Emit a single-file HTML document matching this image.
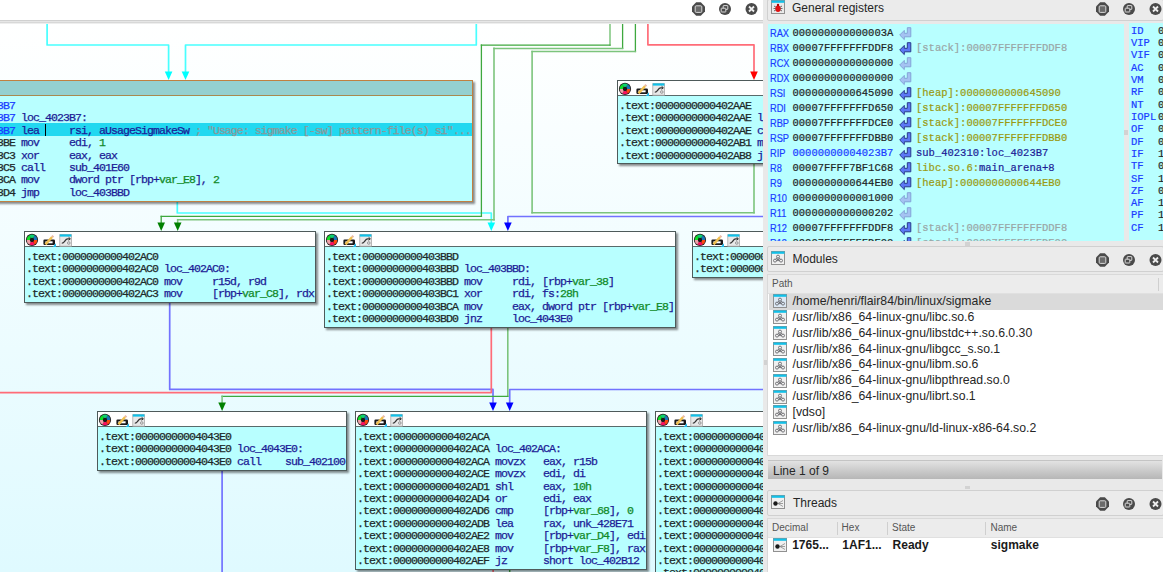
<!DOCTYPE html><html><head><meta charset="utf-8"><style>
*{margin:0;padding:0;box-sizing:border-box}
body{width:1163px;height:572px;overflow:hidden;background:#e9e9e9;position:relative;font-family:"Liberation Sans",sans-serif}
.graph{position:absolute;left:0;top:0;width:762.5px;height:572px;overflow:hidden;background:#fff}
.gtop{position:absolute;left:0;top:0;width:763px;height:20px;background:#fff}
.gsep{position:absolute;left:0;top:20px;width:763px;height:4px;background:linear-gradient(#d0d0d0 0,#d0d0d0 1px,#e6e6e6 1px,#e6e6e6 2px,#d8d8d8 2px,#d8d8d8 3px,#eeeeee 3px)}
.sep{position:absolute;left:763px;top:0;width:4px;height:572px;background:#e8e8e8;border-right:1px solid #dcdcdc}
.gbody{position:absolute;left:0;top:24px;width:763px;height:548px;background:linear-gradient(#ffffff,#dffaff);overflow:hidden}
.edges{position:absolute;left:0;top:0}
.node{position:absolute;border:1px solid #4e5a5a;background:#b8ffff;box-shadow:2px 2px 2px rgba(0,0,0,.45);font-family:"Liberation Mono",monospace;font-size:11.6px;letter-spacing:-0.96px;-webkit-text-stroke:0.25px}
.node .tb{position:absolute;left:0;top:0;right:0;height:15px;background:#fff;border-bottom:1px solid #5a6a6a}
.node.sel{border-color:#c08040}
.node.sel .tb{background:#94d0d0;border-bottom-color:#a88a50}
.ic{position:absolute;left:0;top:0}
.ln{position:absolute;left:1px;white-space:pre;line-height:12.4px;height:12.4px}
.hl{position:absolute;left:0;right:0;height:12.6px;background:#22d8f0}
.cur{position:absolute;left:162.6px;top:42.6px;width:1.6px;height:12px;background:#000}

.ttl{position:absolute;background:#ebebeb;border:1px solid #d0d0d0;border-radius:2px}
.tt{position:absolute;font-size:12px;color:#262626;line-height:14px}
.regs{position:absolute;background:#b8ffff;overflow:hidden;font-family:"Liberation Mono",monospace;font-size:10.5px;-webkit-text-stroke:0.2px}
.rn{position:absolute;left:2px;transform:scaleX(0.88);transform-origin:0 0;line-height:15px;color:#1a3cff;font-family:"Liberation Sans",sans-serif;font-size:10.5px}
.rv{position:absolute;left:24.5px;line-height:15px;color:#1e2626}
.rr{position:absolute;left:148px;line-height:15px;white-space:pre}
.fn{position:absolute;left:2px;line-height:12.32px;color:#1a3cff}
.fv{position:absolute;left:29px;line-height:12.32px;color:#1e2626}
.list{position:absolute;background:#fff;border:1px solid #d9d9d9;overflow:hidden}
.hdr{position:absolute;left:0;top:0;right:0;background:#ececec;font-size:10px;color:#555;border-bottom:1px solid #e0e0e0}
.hsep{position:absolute;top:3px;width:1px;height:13px;background:#cfcfcf}
.mt{position:absolute;left:24.5px;font-size:12.25px;line-height:15.85px;color:#262626;white-space:pre}
.status{position:absolute;background:linear-gradient(#e2e2e2,#b6b6b6);font-size:12px;color:#262626;border-top:1px solid #c4c4c4}
.tr{position:absolute;top:19.6px;font-size:12px;font-weight:bold;color:#1a1a1a}
</style></head><body><div class="ttl" style="left:767px;top:-1px;width:397px;height:22px"></div>
<svg style="position:absolute;left:771px;top:0px" width="14" height="14" viewBox="0 0 14 14">
<rect x="0.5" y="0.5" width="13" height="13" fill="#eaeaea" stroke="#909090" stroke-width="1"/>
<rect x="0.5" y="0.5" width="13" height="2.3" fill="#12c0e8"/>
<path d="M3,6 L11,11 M11,6 L3,11 M2.5,8.5 L11.5,8.5" stroke="#333" stroke-width="0.7"/>
<ellipse cx="7" cy="8.7" rx="2.6" ry="3.3" fill="#e01010"/>
<circle cx="7" cy="5" r="1.2" fill="#a00"/>
</svg>
<div class="tt" style="left:792px;top:1px">General registers</div>
<svg style="position:absolute;left:1095.5px;top:1px" width="70" height="16" viewBox="0 0 70 16">
<path d="M3.7,1.8 L8.3,1.8 L12.5,6 L12.5,11 L8.3,15.2 L3.7,15.2 L-0.5,11 L-0.5,6Z" fill="#4a4a4a" transform="translate(0.5,-0.5)"/>
<rect x="3.2" y="4.8" width="6.6" height="6.6" rx="1" fill="#6a6a6a" stroke="#d8d8d8" stroke-width="1"/>
<circle cx="33" cy="8" r="6" fill="#4a4a4a"/>
<rect x="31.2" y="4.6" width="4.6" height="3.8" rx="0.4" fill="none" stroke="#d8d8d8" stroke-width="1"/>
<rect x="29.2" y="7.2" width="4.6" height="3.8" rx="0.4" fill="#4a4a4a" stroke="#d8d8d8" stroke-width="1"/>
<circle cx="59.5" cy="8" r="6" fill="#4a4a4a"/>
<path d="M57,5.5 L62,10.5 M62,5.5 L57,10.5" stroke="#eee" stroke-width="1.8"/>
</svg>
<div class="regs" style="left:768px;top:23.5px;width:356px;height:217.5px">
<div style="position:absolute;left:0;top:2px;width:356px;height:240px">
<div class="rn" style="top:0.0px">RAX</div>
<div class="rv" style="top:0.0px;">000000000000003A</div>
<div style="position:absolute;left:130.6px;top:1.6px"><svg class="ra" width="13" height="14" viewBox="0 0 13 14"><path d="M8.3,0.7 L11.8,0.7 L11.8,9.8 L5.3,9.8 L5.3,12.6 L0.7,8 L5.3,3.4 L5.3,6.3 L8.3,6.3Z" fill="#a4c2f2" stroke="#84a4d8" stroke-width="1" stroke-linejoin="round"/></svg></div>
<div class="rn" style="top:15.0px">RBX</div>
<div class="rv" style="top:15.0px;">00007FFFFFFFDDF8</div>
<div style="position:absolute;left:130.6px;top:16.6px"><svg class="ra" width="13" height="14" viewBox="0 0 13 14"><path d="M8.3,0.7 L11.8,0.7 L11.8,9.8 L5.3,9.8 L5.3,12.6 L0.7,8 L5.3,3.4 L5.3,6.3 L8.3,6.3Z" fill="#5c78f4" stroke="#283a8c" stroke-width="1" stroke-linejoin="round"/></svg></div>
<div class="rr" style="top:15.0px"><span style="color:#9aa6a6">[stack]:00007FFFFFFFDDF8</span></div>
<div class="rn" style="top:30.0px">RCX</div>
<div class="rv" style="top:30.0px;">0000000000000000</div>
<div style="position:absolute;left:130.6px;top:31.6px"><svg class="ra" width="13" height="14" viewBox="0 0 13 14"><path d="M8.3,0.7 L11.8,0.7 L11.8,9.8 L5.3,9.8 L5.3,12.6 L0.7,8 L5.3,3.4 L5.3,6.3 L8.3,6.3Z" fill="#a4c2f2" stroke="#84a4d8" stroke-width="1" stroke-linejoin="round"/></svg></div>
<div class="rn" style="top:45.0px">RDX</div>
<div class="rv" style="top:45.0px;">0000000000000000</div>
<div style="position:absolute;left:130.6px;top:46.6px"><svg class="ra" width="13" height="14" viewBox="0 0 13 14"><path d="M8.3,0.7 L11.8,0.7 L11.8,9.8 L5.3,9.8 L5.3,12.6 L0.7,8 L5.3,3.4 L5.3,6.3 L8.3,6.3Z" fill="#a4c2f2" stroke="#84a4d8" stroke-width="1" stroke-linejoin="round"/></svg></div>
<div class="rn" style="top:60.0px">RSI</div>
<div class="rv" style="top:60.0px;">0000000000645090</div>
<div style="position:absolute;left:130.6px;top:61.6px"><svg class="ra" width="13" height="14" viewBox="0 0 13 14"><path d="M8.3,0.7 L11.8,0.7 L11.8,9.8 L5.3,9.8 L5.3,12.6 L0.7,8 L5.3,3.4 L5.3,6.3 L8.3,6.3Z" fill="#5c78f4" stroke="#283a8c" stroke-width="1" stroke-linejoin="round"/></svg></div>
<div class="rr" style="top:60.0px"><span style="color:#9a9a10">[heap]:0000000000645090</span></div>
<div class="rn" style="top:75.0px">RDI</div>
<div class="rv" style="top:75.0px;">00007FFFFFFFD650</div>
<div style="position:absolute;left:130.6px;top:76.6px"><svg class="ra" width="13" height="14" viewBox="0 0 13 14"><path d="M8.3,0.7 L11.8,0.7 L11.8,9.8 L5.3,9.8 L5.3,12.6 L0.7,8 L5.3,3.4 L5.3,6.3 L8.3,6.3Z" fill="#5c78f4" stroke="#283a8c" stroke-width="1" stroke-linejoin="round"/></svg></div>
<div class="rr" style="top:75.0px"><span style="color:#9a9a10">[stack]:00007FFFFFFFD650</span></div>
<div class="rn" style="top:90.0px">RBP</div>
<div class="rv" style="top:90.0px;">00007FFFFFFFDCE0</div>
<div style="position:absolute;left:130.6px;top:91.6px"><svg class="ra" width="13" height="14" viewBox="0 0 13 14"><path d="M8.3,0.7 L11.8,0.7 L11.8,9.8 L5.3,9.8 L5.3,12.6 L0.7,8 L5.3,3.4 L5.3,6.3 L8.3,6.3Z" fill="#5c78f4" stroke="#283a8c" stroke-width="1" stroke-linejoin="round"/></svg></div>
<div class="rr" style="top:90.0px"><span style="color:#9a9a10">[stack]:00007FFFFFFFDCE0</span></div>
<div class="rn" style="top:105.0px">RSP</div>
<div class="rv" style="top:105.0px;">00007FFFFFFFDBB0</div>
<div style="position:absolute;left:130.6px;top:106.6px"><svg class="ra" width="13" height="14" viewBox="0 0 13 14"><path d="M8.3,0.7 L11.8,0.7 L11.8,9.8 L5.3,9.8 L5.3,12.6 L0.7,8 L5.3,3.4 L5.3,6.3 L8.3,6.3Z" fill="#5c78f4" stroke="#283a8c" stroke-width="1" stroke-linejoin="round"/></svg></div>
<div class="rr" style="top:105.0px"><span style="color:#9a9a10">[stack]:00007FFFFFFFDBB0</span></div>
<div class="rn" style="top:120.0px">RIP</div>
<div class="rv" style="top:120.0px;color:#1a3cff">00000000004023B7</div>
<div style="position:absolute;left:130.6px;top:121.6px"><svg class="ra" width="13" height="14" viewBox="0 0 13 14"><path d="M8.3,0.7 L11.8,0.7 L11.8,9.8 L5.3,9.8 L5.3,12.6 L0.7,8 L5.3,3.4 L5.3,6.3 L8.3,6.3Z" fill="#5c78f4" stroke="#283a8c" stroke-width="1" stroke-linejoin="round"/></svg></div>
<div class="rr" style="top:120.0px"><span style="color:#1c1c96">sub_402310:loc_4023B7</span></div>
<div class="rn" style="top:135.0px">R8</div>
<div class="rv" style="top:135.0px;">00007FFFF7BF1C68</div>
<div style="position:absolute;left:130.6px;top:136.6px"><svg class="ra" width="13" height="14" viewBox="0 0 13 14"><path d="M8.3,0.7 L11.8,0.7 L11.8,9.8 L5.3,9.8 L5.3,12.6 L0.7,8 L5.3,3.4 L5.3,6.3 L8.3,6.3Z" fill="#5c78f4" stroke="#283a8c" stroke-width="1" stroke-linejoin="round"/></svg></div>
<div class="rr" style="top:135.0px"><span style="color:#9a9a10">libc.so.6:</span><span style="color:#1c1c96">main_arena+8</span></div>
<div class="rn" style="top:150.0px">R9</div>
<div class="rv" style="top:150.0px;">0000000000644EB0</div>
<div style="position:absolute;left:130.6px;top:151.6px"><svg class="ra" width="13" height="14" viewBox="0 0 13 14"><path d="M8.3,0.7 L11.8,0.7 L11.8,9.8 L5.3,9.8 L5.3,12.6 L0.7,8 L5.3,3.4 L5.3,6.3 L8.3,6.3Z" fill="#5c78f4" stroke="#283a8c" stroke-width="1" stroke-linejoin="round"/></svg></div>
<div class="rr" style="top:150.0px"><span style="color:#9a9a10">[heap]:0000000000644EB0</span></div>
<div class="rn" style="top:165.0px">R10</div>
<div class="rv" style="top:165.0px;">0000000000001000</div>
<div style="position:absolute;left:130.6px;top:166.6px"><svg class="ra" width="13" height="14" viewBox="0 0 13 14"><path d="M8.3,0.7 L11.8,0.7 L11.8,9.8 L5.3,9.8 L5.3,12.6 L0.7,8 L5.3,3.4 L5.3,6.3 L8.3,6.3Z" fill="#a4c2f2" stroke="#84a4d8" stroke-width="1" stroke-linejoin="round"/></svg></div>
<div class="rn" style="top:180.0px">R11</div>
<div class="rv" style="top:180.0px;">0000000000000202</div>
<div style="position:absolute;left:130.6px;top:181.6px"><svg class="ra" width="13" height="14" viewBox="0 0 13 14"><path d="M8.3,0.7 L11.8,0.7 L11.8,9.8 L5.3,9.8 L5.3,12.6 L0.7,8 L5.3,3.4 L5.3,6.3 L8.3,6.3Z" fill="#a4c2f2" stroke="#84a4d8" stroke-width="1" stroke-linejoin="round"/></svg></div>
<div class="rn" style="top:195.0px">R12</div>
<div class="rv" style="top:195.0px;">00007FFFFFFFDDF8</div>
<div style="position:absolute;left:130.6px;top:196.6px"><svg class="ra" width="13" height="14" viewBox="0 0 13 14"><path d="M8.3,0.7 L11.8,0.7 L11.8,9.8 L5.3,9.8 L5.3,12.6 L0.7,8 L5.3,3.4 L5.3,6.3 L8.3,6.3Z" fill="#5c78f4" stroke="#283a8c" stroke-width="1" stroke-linejoin="round"/></svg></div>
<div class="rr" style="top:195.0px"><span style="color:#9aa6a6">[stack]:00007FFFFFFFDDF8</span></div>
<div class="rn" style="top:210.0px">R13</div>
<div class="rv" style="top:210.0px;">00007FFFFFFFDE00</div>
<div style="position:absolute;left:130.6px;top:211.6px"><svg class="ra" width="13" height="14" viewBox="0 0 13 14"><path d="M8.3,0.7 L11.8,0.7 L11.8,9.8 L5.3,9.8 L5.3,12.6 L0.7,8 L5.3,3.4 L5.3,6.3 L8.3,6.3Z" fill="#5c78f4" stroke="#283a8c" stroke-width="1" stroke-linejoin="round"/></svg></div>
<div class="rr" style="top:210.0px"><span style="color:#9aa6a6">[stack]:00007FFFFFFFDE00</span></div>
</div></div>
<div class="regs" style="left:1129px;top:23px;width:40px;height:217px">
<div style="position:absolute;left:0;top:1.7px;width:40px;height:240px">
<div class="fn" style="top:0.00px">ID</div><div class="fv" style="top:0.00px">0</div>
<div class="fn" style="top:12.32px">VIP</div><div class="fv" style="top:12.32px">0</div>
<div class="fn" style="top:24.64px">VIF</div><div class="fv" style="top:24.64px">0</div>
<div class="fn" style="top:36.96px">AC</div><div class="fv" style="top:36.96px">0</div>
<div class="fn" style="top:49.28px">VM</div><div class="fv" style="top:49.28px">0</div>
<div class="fn" style="top:61.60px">RF</div><div class="fv" style="top:61.60px">0</div>
<div class="fn" style="top:73.92px">NT</div><div class="fv" style="top:73.92px">0</div>
<div class="fn" style="top:86.24px">IOPL</div><div class="fv" style="top:86.24px">0</div>
<div class="fn" style="top:98.56px">OF</div><div class="fv" style="top:98.56px">0</div>
<div class="fn" style="top:110.88px">DF</div><div class="fv" style="top:110.88px">0</div>
<div class="fn" style="top:123.20px">IF</div><div class="fv" style="top:123.20px">1</div>
<div class="fn" style="top:135.52px">TF</div><div class="fv" style="top:135.52px">0</div>
<div class="fn" style="top:147.84px">SF</div><div class="fv" style="top:147.84px">1</div>
<div class="fn" style="top:160.16px">ZF</div><div class="fv" style="top:160.16px">0</div>
<div class="fn" style="top:172.48px">AF</div><div class="fv" style="top:172.48px">1</div>
<div class="fn" style="top:184.80px">PF</div><div class="fv" style="top:184.80px">1</div>
<div class="fn" style="top:197.12px">CF</div><div class="fv" style="top:197.12px">1</div>
</div></div>
<div style="position:absolute;left:965px;top:242.4px;width:5px;height:3.3px;background:#d2d2d2"></div>
<div style="position:absolute;left:1124.4px;top:130px;width:3.7px;height:4.6px;background:#d2d2d2"></div>
<div style="position:absolute;left:965px;top:486px;width:5px;height:3.3px;background:#d2d2d2"></div>
<div style="position:absolute;left:763.5px;top:360px;width:3.5px;height:4.6px;background:#d2d2d2"></div>
<div class="ttl" style="left:767px;top:245.5px;width:397px;height:26px"></div>
<svg style="position:absolute;left:771px;top:251px" width="14" height="14" viewBox="0 0 14 14">
<rect x="0.5" y="0.5" width="13" height="13" fill="#f0f0f0" stroke="#909090" stroke-width="1"/>
<rect x="0.5" y="0.5" width="13" height="2.3" fill="#12c0e8"/>
<g fill="none" stroke="#5a5a60" stroke-width="0.8"><circle cx="7" cy="5.6" r="1.5"/><circle cx="4" cy="9.6" r="1.5"/><circle cx="10" cy="9.6" r="1.5"/><path d="M6,7 L4.6,8.2 M8,7 L9.4,8.2 M5.5,9.6 L8.5,9.6"/></g><circle cx="7" cy="8.3" r="0.9" fill="#5a5a60"/>
</svg>
<div class="tt" style="left:792.5px;top:252px">Modules</div>
<svg style="position:absolute;left:1095.5px;top:251.5px" width="70" height="16" viewBox="0 0 70 16">
<path d="M3.7,1.8 L8.3,1.8 L12.5,6 L12.5,11 L8.3,15.2 L3.7,15.2 L-0.5,11 L-0.5,6Z" fill="#4a4a4a" transform="translate(0.5,-0.5)"/>
<rect x="3.2" y="4.8" width="6.6" height="6.6" rx="1" fill="#6a6a6a" stroke="#d8d8d8" stroke-width="1"/>
<circle cx="33" cy="8" r="6" fill="#4a4a4a"/>
<rect x="31.2" y="4.6" width="4.6" height="3.8" rx="0.4" fill="none" stroke="#d8d8d8" stroke-width="1"/>
<rect x="29.2" y="7.2" width="4.6" height="3.8" rx="0.4" fill="#4a4a4a" stroke="#d8d8d8" stroke-width="1"/>
<circle cx="59.5" cy="8" r="6" fill="#4a4a4a"/>
<path d="M57,5.5 L62,10.5 M62,5.5 L57,10.5" stroke="#eee" stroke-width="1.8"/>
</svg>
<div class="list" style="left:767px;top:274px;width:397px;height:182px">
<div class="hdr" style="height:19px"><span style="position:absolute;left:4px;top:3px">Path</span><span class="hsep" style="left:390px"></span></div>
<div style="position:absolute;left:1px;right:0;top:19.20px;height:15.85px;background:#dadada"></div>
<svg style="position:absolute;left:5px;top:19.4px" width="14" height="14" viewBox="0 0 14 14">
<rect x="0.5" y="0.5" width="13" height="13" fill="#dce8f4" stroke="#909090" stroke-width="1"/>
<rect x="0.5" y="0.5" width="13" height="2.3" fill="#12c0e8"/>
<g fill="none" stroke="#5a5a60" stroke-width="0.8"><circle cx="7" cy="5.6" r="1.5"/><circle cx="4" cy="9.6" r="1.5"/><circle cx="10" cy="9.6" r="1.5"/><path d="M6,7 L4.6,8.2 M8,7 L9.4,8.2 M5.5,9.6 L8.5,9.6"/></g><circle cx="7" cy="8.3" r="0.9" fill="#5a5a60"/>
</svg>
<div class="mt" style="top:19.00px">/home/henri/flair84/bin/linux/sigmake</div>
<svg style="position:absolute;left:5px;top:35.25px" width="14" height="14" viewBox="0 0 14 14">
<rect x="0.5" y="0.5" width="13" height="13" fill="#f0f0f0" stroke="#909090" stroke-width="1"/>
<rect x="0.5" y="0.5" width="13" height="2.3" fill="#12c0e8"/>
<g fill="none" stroke="#5a5a60" stroke-width="0.8"><circle cx="7" cy="5.6" r="1.5"/><circle cx="4" cy="9.6" r="1.5"/><circle cx="10" cy="9.6" r="1.5"/><path d="M6,7 L4.6,8.2 M8,7 L9.4,8.2 M5.5,9.6 L8.5,9.6"/></g><circle cx="7" cy="8.3" r="0.9" fill="#5a5a60"/>
</svg>
<div class="mt" style="top:34.85px">/usr/lib/x86_64-linux-gnu/libc.so.6</div>
<svg style="position:absolute;left:5px;top:51.1px" width="14" height="14" viewBox="0 0 14 14">
<rect x="0.5" y="0.5" width="13" height="13" fill="#f0f0f0" stroke="#909090" stroke-width="1"/>
<rect x="0.5" y="0.5" width="13" height="2.3" fill="#12c0e8"/>
<g fill="none" stroke="#5a5a60" stroke-width="0.8"><circle cx="7" cy="5.6" r="1.5"/><circle cx="4" cy="9.6" r="1.5"/><circle cx="10" cy="9.6" r="1.5"/><path d="M6,7 L4.6,8.2 M8,7 L9.4,8.2 M5.5,9.6 L8.5,9.6"/></g><circle cx="7" cy="8.3" r="0.9" fill="#5a5a60"/>
</svg>
<div class="mt" style="top:50.70px">/usr/lib/x86_64-linux-gnu/libstdc++.so.6.0.30</div>
<svg style="position:absolute;left:5px;top:66.95px" width="14" height="14" viewBox="0 0 14 14">
<rect x="0.5" y="0.5" width="13" height="13" fill="#f0f0f0" stroke="#909090" stroke-width="1"/>
<rect x="0.5" y="0.5" width="13" height="2.3" fill="#12c0e8"/>
<g fill="none" stroke="#5a5a60" stroke-width="0.8"><circle cx="7" cy="5.6" r="1.5"/><circle cx="4" cy="9.6" r="1.5"/><circle cx="10" cy="9.6" r="1.5"/><path d="M6,7 L4.6,8.2 M8,7 L9.4,8.2 M5.5,9.6 L8.5,9.6"/></g><circle cx="7" cy="8.3" r="0.9" fill="#5a5a60"/>
</svg>
<div class="mt" style="top:66.55px">/usr/lib/x86_64-linux-gnu/libgcc_s.so.1</div>
<svg style="position:absolute;left:5px;top:82.80000000000001px" width="14" height="14" viewBox="0 0 14 14">
<rect x="0.5" y="0.5" width="13" height="13" fill="#f0f0f0" stroke="#909090" stroke-width="1"/>
<rect x="0.5" y="0.5" width="13" height="2.3" fill="#12c0e8"/>
<g fill="none" stroke="#5a5a60" stroke-width="0.8"><circle cx="7" cy="5.6" r="1.5"/><circle cx="4" cy="9.6" r="1.5"/><circle cx="10" cy="9.6" r="1.5"/><path d="M6,7 L4.6,8.2 M8,7 L9.4,8.2 M5.5,9.6 L8.5,9.6"/></g><circle cx="7" cy="8.3" r="0.9" fill="#5a5a60"/>
</svg>
<div class="mt" style="top:82.40px">/usr/lib/x86_64-linux-gnu/libm.so.6</div>
<svg style="position:absolute;left:5px;top:98.65px" width="14" height="14" viewBox="0 0 14 14">
<rect x="0.5" y="0.5" width="13" height="13" fill="#f0f0f0" stroke="#909090" stroke-width="1"/>
<rect x="0.5" y="0.5" width="13" height="2.3" fill="#12c0e8"/>
<g fill="none" stroke="#5a5a60" stroke-width="0.8"><circle cx="7" cy="5.6" r="1.5"/><circle cx="4" cy="9.6" r="1.5"/><circle cx="10" cy="9.6" r="1.5"/><path d="M6,7 L4.6,8.2 M8,7 L9.4,8.2 M5.5,9.6 L8.5,9.6"/></g><circle cx="7" cy="8.3" r="0.9" fill="#5a5a60"/>
</svg>
<div class="mt" style="top:98.25px">/usr/lib/x86_64-linux-gnu/libpthread.so.0</div>
<svg style="position:absolute;left:5px;top:114.5px" width="14" height="14" viewBox="0 0 14 14">
<rect x="0.5" y="0.5" width="13" height="13" fill="#f0f0f0" stroke="#909090" stroke-width="1"/>
<rect x="0.5" y="0.5" width="13" height="2.3" fill="#12c0e8"/>
<g fill="none" stroke="#5a5a60" stroke-width="0.8"><circle cx="7" cy="5.6" r="1.5"/><circle cx="4" cy="9.6" r="1.5"/><circle cx="10" cy="9.6" r="1.5"/><path d="M6,7 L4.6,8.2 M8,7 L9.4,8.2 M5.5,9.6 L8.5,9.6"/></g><circle cx="7" cy="8.3" r="0.9" fill="#5a5a60"/>
</svg>
<div class="mt" style="top:114.10px">/usr/lib/x86_64-linux-gnu/librt.so.1</div>
<svg style="position:absolute;left:5px;top:130.35px" width="14" height="14" viewBox="0 0 14 14">
<rect x="0.5" y="0.5" width="13" height="13" fill="#f0f0f0" stroke="#909090" stroke-width="1"/>
<rect x="0.5" y="0.5" width="13" height="2.3" fill="#12c0e8"/>
<g fill="none" stroke="#5a5a60" stroke-width="0.8"><circle cx="7" cy="5.6" r="1.5"/><circle cx="4" cy="9.6" r="1.5"/><circle cx="10" cy="9.6" r="1.5"/><path d="M6,7 L4.6,8.2 M8,7 L9.4,8.2 M5.5,9.6 L8.5,9.6"/></g><circle cx="7" cy="8.3" r="0.9" fill="#5a5a60"/>
</svg>
<div class="mt" style="top:129.95px">[vdso]</div>
<svg style="position:absolute;left:5px;top:146.20000000000002px" width="14" height="14" viewBox="0 0 14 14">
<rect x="0.5" y="0.5" width="13" height="13" fill="#f0f0f0" stroke="#909090" stroke-width="1"/>
<rect x="0.5" y="0.5" width="13" height="2.3" fill="#12c0e8"/>
<g fill="none" stroke="#5a5a60" stroke-width="0.8"><circle cx="7" cy="5.6" r="1.5"/><circle cx="4" cy="9.6" r="1.5"/><circle cx="10" cy="9.6" r="1.5"/><path d="M6,7 L4.6,8.2 M8,7 L9.4,8.2 M5.5,9.6 L8.5,9.6"/></g><circle cx="7" cy="8.3" r="0.9" fill="#5a5a60"/>
</svg>
<div class="mt" style="top:145.80px">/usr/lib/x86_64-linux-gnu/ld-linux-x86-64.so.2</div>
</div>
<div class="status" style="left:767.5px;top:459.8px;width:394.5px;height:19px"><span style="position:absolute;left:5.5px;top:3px">Line 1 of 9</span></div>
<div class="ttl" style="left:767px;top:489.5px;width:397px;height:26px"></div>
<svg style="position:absolute;left:771px;top:495px" width="14" height="14" viewBox="0 0 14 14">
<rect x="0.5" y="0.5" width="13" height="13" fill="#f0f0f0" stroke="#909090" stroke-width="1"/>
<rect x="0.5" y="0.5" width="13" height="2.3" fill="#12c0e8"/>
<circle cx="4.5" cy="8.5" r="2.2" fill="#1a1a1a"/>
<path d="M7,8.5 L12,5.5 M7,8.5 L12,8.5 M7,8.5 L12,11.5" stroke="#888" stroke-width="0.8"/>
</svg>
<div class="tt" style="left:793px;top:496px">Threads</div>
<svg style="position:absolute;left:1095.5px;top:495.5px" width="70" height="16" viewBox="0 0 70 16">
<path d="M3.7,1.8 L8.3,1.8 L12.5,6 L12.5,11 L8.3,15.2 L3.7,15.2 L-0.5,11 L-0.5,6Z" fill="#4a4a4a" transform="translate(0.5,-0.5)"/>
<rect x="3.2" y="4.8" width="6.6" height="6.6" rx="1" fill="#6a6a6a" stroke="#d8d8d8" stroke-width="1"/>
<circle cx="33" cy="8" r="6" fill="#4a4a4a"/>
<rect x="31.2" y="4.6" width="4.6" height="3.8" rx="0.4" fill="none" stroke="#d8d8d8" stroke-width="1"/>
<rect x="29.2" y="7.2" width="4.6" height="3.8" rx="0.4" fill="#4a4a4a" stroke="#d8d8d8" stroke-width="1"/>
<circle cx="59.5" cy="8" r="6" fill="#4a4a4a"/>
<path d="M57,5.5 L62,10.5 M62,5.5 L57,10.5" stroke="#eee" stroke-width="1.8"/>
</svg>
<div class="list" style="left:767px;top:517.5px;width:397px;height:60px">
<div class="hdr" style="height:19.5px"><span style="position:absolute;left:4px;top:3.5px">Decimal</span><span class="hsep" style="left:69px"></span><span style="position:absolute;left:73.6px;top:3.5px">Hex</span><span class="hsep" style="left:119px"></span><span style="position:absolute;left:124px;top:3.5px">State</span><span class="hsep" style="left:217px"></span><span style="position:absolute;left:222.5px;top:3.5px">Name</span></div>
<svg style="position:absolute;left:5px;top:19.5px" width="14" height="14" viewBox="0 0 14 14">
<rect x="0.5" y="0.5" width="13" height="13" fill="#f0f0f0" stroke="#909090" stroke-width="1"/>
<rect x="0.5" y="0.5" width="13" height="2.3" fill="#12c0e8"/>
<circle cx="4.5" cy="8.5" r="2.2" fill="#1a1a1a"/>
<path d="M7,8.5 L12,5.5 M7,8.5 L12,8.5 M7,8.5 L12,11.5" stroke="#888" stroke-width="0.8"/>
</svg>
<div class="tr" style="left:24.2px">1765...</div><div class="tr" style="left:74.3px">1AF1...</div><div class="tr" style="left:124.6px">Ready</div><div class="tr" style="left:222.8px">sigmake</div>
</div>
<div class="graph"><div class="gtop"></div><svg style="position:absolute;left:692px;top:1px" width="70" height="16" viewBox="0 0 70 16">
<path d="M3.7,1.8 L8.3,1.8 L12.5,6 L12.5,11 L8.3,15.2 L3.7,15.2 L-0.5,11 L-0.5,6Z" fill="#4a4a4a" transform="translate(0.5,-0.5)"/>
<rect x="3.2" y="4.8" width="6.6" height="6.6" rx="1" fill="#6a6a6a" stroke="#d8d8d8" stroke-width="1"/>
<circle cx="33" cy="8" r="6" fill="#4a4a4a"/>
<rect x="31.2" y="4.6" width="4.6" height="3.8" rx="0.4" fill="none" stroke="#d8d8d8" stroke-width="1"/>
<rect x="29.2" y="7.2" width="4.6" height="3.8" rx="0.4" fill="#4a4a4a" stroke="#d8d8d8" stroke-width="1"/>
<circle cx="59.5" cy="8" r="6" fill="#4a4a4a"/>
<path d="M57,5.5 L62,10.5 M62,5.5 L57,10.5" stroke="#eee" stroke-width="1.8"/>
</svg><div class="gsep"></div><div class="gbody"><div style="position:absolute;left:0;top:-24px;width:763px;height:572px"><svg class="edges" width="763" height="572"><polyline points="47.1,22 47.1,45.0 168.6,45.0 168.6,75" stroke="#48ffff" stroke-width="1.7" fill="none" stroke-linejoin="round"/>
<path d="M164.79999999999998,71.4 L172.4,71.4 L168.6,80 Z" fill="#00ffff"/>
<polyline points="476.3,22 476.3,45.0 185.5,45.0 185.5,75" stroke="#48ffff" stroke-width="1.7" fill="none" stroke-linejoin="round"/>
<path d="M181.7,71.4 L189.3,71.4 L185.5,80 Z" fill="#00ffff"/>
<polyline points="177.3,201 177.3,213.0 491.3,213.0 491.3,226" stroke="#48ffff" stroke-width="1.7" fill="none" stroke-linejoin="round"/>
<path d="M487.5,222.4 L495.1,222.4 L491.3,231 Z" fill="#00ffff"/>
<line x1="610.0" y1="22" x2="610.0" y2="45.1" stroke="#7cc47c" stroke-width="1.5" stroke-linecap="square"/>
<line x1="610.0" y1="45.1" x2="481.4" y2="45.1" stroke="#3ea83e" stroke-width="1.3" stroke-linecap="square"/>
<line x1="481.4" y1="45.1" x2="481.4" y2="216.3" stroke="#3ea83e" stroke-width="1.3" stroke-linecap="square"/>
<line x1="481.4" y1="216.3" x2="161.2" y2="216.3" stroke="#3ea83e" stroke-width="1.3" stroke-linecap="square"/>
<line x1="161.2" y1="216.3" x2="161.2" y2="226" stroke="#3ea83e" stroke-width="1.3" stroke-linecap="square"/>
<path d="M157.39999999999998,222.4 L165.0,222.4 L161.2,231 Z" fill="#008000"/>
<line x1="622.6" y1="22" x2="622.6" y2="48.4" stroke="#3ea83e" stroke-width="1.3" stroke-linecap="square"/>
<line x1="622.6" y1="48.4" x2="494.0" y2="48.4" stroke="#7cc47c" stroke-width="1.5" stroke-linecap="square"/>
<line x1="494.0" y1="48.4" x2="494.0" y2="219.7" stroke="#7cc47c" stroke-width="1.6" stroke-linecap="square"/>
<line x1="494.0" y1="219.7" x2="177.7" y2="219.7" stroke="#7cc47c" stroke-width="1.6" stroke-linecap="square"/>
<line x1="177.7" y1="219.7" x2="177.7" y2="226" stroke="#7cc47c" stroke-width="1.5" stroke-linecap="square"/>
<path d="M173.89999999999998,222.4 L181.5,222.4 L177.7,231 Z" fill="#008000"/>
<line x1="635.4" y1="22" x2="635.4" y2="51.5" stroke="#3ea83e" stroke-width="1.3" stroke-linecap="square"/>
<line x1="635.4" y1="51.5" x2="532.1" y2="51.5" stroke="#7cc47c" stroke-width="1.5" stroke-linecap="square"/>
<line x1="532.1" y1="51.5" x2="532.1" y2="212.8" stroke="#7cc47c" stroke-width="1.6" stroke-linecap="square"/>
<line x1="532.1" y1="212.8" x2="754.0" y2="212.8" stroke="#7cc47c" stroke-width="1.6" stroke-linecap="square"/>
<line x1="754.0" y1="212.8" x2="754.0" y2="163" stroke="#7cc47c" stroke-width="1.6" stroke-linecap="square"/>
<polyline points="647.9,22 647.9,44.8 754.0,44.8 754.0,75" stroke="#ff6c78" stroke-width="1.7" fill="none" stroke-linejoin="round"/>
<path d="M750.2,71.4 L757.8,71.4 L754.0,80 Z" fill="#ff0000"/>
<polyline points="763,216.5 507.9,216.5 507.9,226" stroke="#7272ff" stroke-width="1.7" fill="none" stroke-linejoin="round"/>
<path d="M504.09999999999997,222.4 L511.7,222.4 L507.9,231 Z" fill="#0000ff"/>
<polyline points="169.7,302 169.7,389.4 493.0,389.4 493.0,406" stroke="#7272ff" stroke-width="1.7" fill="none" stroke-linejoin="round"/>
<path d="M489.2,402.4 L496.8,402.4 L493.0,411 Z" fill="#0000ff"/>
<polyline points="763,389.5 509.7,389.5 509.7,406" stroke="#7272ff" stroke-width="1.7" fill="none" stroke-linejoin="round"/>
<path d="M505.9,402.4 L513.5,402.4 L509.7,411 Z" fill="#0000ff"/>
<polyline points="491.3,327 491.3,392.6 0,392.6" stroke="#ff6c78" stroke-width="1.7" fill="none" stroke-linejoin="round"/>
<line x1="507.8" y1="327" x2="507.8" y2="396.3" stroke="#7cc47c" stroke-width="1.6" stroke-linecap="square"/>
<line x1="507.8" y1="396.3" x2="222.1" y2="396.3" stroke="#3ea83e" stroke-width="1.3" stroke-linecap="square"/>
<line x1="222.1" y1="396.3" x2="222.1" y2="406" stroke="#7cc47c" stroke-width="1.5" stroke-linecap="square"/>
<path d="M218.29999999999998,402.4 L225.9,402.4 L222.1,411 Z" fill="#008000"/>
<polyline points="222.1,469 222.1,572" stroke="#7272ff" stroke-width="1.7" fill="none" stroke-linejoin="round"/>
<polyline points="493.1,569 493.1,572" stroke="#ff6c78" stroke-width="1.7" fill="none" stroke-linejoin="round"/>
<line x1="509.7" y1="569" x2="509.7" y2="572" stroke="#3ea83e" stroke-width="1.5" stroke-linecap="square"/></svg>
<div class="node sel" style="left:-119px;top:80px;width:592px;height:121.6px">
<div class="tb"></div>
<div class="hl" style="top:42.1px"></div>
<div class="ln" style="top:19.00px"><span style="color:#1a3cff">.text:00000000004023B7</span></div>
<div class="ln" style="top:31.40px"><span style="color:#1a3cff">.text:00000000004023B7</span><span style="color:#1c1c96"> loc_4023B7:</span></div>
<div class="ln" style="top:43.80px"><span style="color:#1a3cff">.text:00000000004023B7</span><span style="color:#1c1c96"> lea     rsi, aUsageSigmakeSw</span><span style="color:#8a9a9a"> ; &quot;Usage: sigmake [-sw] pattern-file(s) si&quot;...</span></div>
<div class="ln" style="top:56.20px"><span style="color:#1e2a2a">.text:00000000004023BE</span><span style="color:#1c1c96"> mov     edi, </span><span style="color:#108a28">1</span></div>
<div class="ln" style="top:68.60px"><span style="color:#1e2a2a">.text:00000000004023C3</span><span style="color:#1c1c96"> xor     eax, eax</span></div>
<div class="ln" style="top:81.00px"><span style="color:#1e2a2a">.text:00000000004023C5</span><span style="color:#1c1c96"> call    sub_401E60</span></div>
<div class="ln" style="top:93.40px"><span style="color:#1e2a2a">.text:00000000004023CA</span><span style="color:#1c1c96"> mov     dword ptr [rbp+</span><span style="color:#108a28">var_E8</span><span style="color:#1c1c96">], </span><span style="color:#108a28">2</span></div>
<div class="ln" style="top:105.80px"><span style="color:#1e2a2a">.text:00000000004023D4</span><span style="color:#1c1c96"> jmp     loc_403BBD</span></div>
<div class="cur"></div>
</div>
<div class="node" style="left:617px;top:80px;width:300px;height:84.4px">
<div class="tb"><svg class="ic" width="50" height="15" viewBox="0 0 50 15">
<g transform="translate(7,7.9)">
<circle r="6.1" fill="#222"/>
<g transform="rotate(30)">
<path d="M0,-5.3 A5.3,5.3 0 0 1 4.59,-2.65 L1.73,-1 A2,2 0 0 0 0,-2Z" fill="#1878b8"/>
<path d="M4.59,-2.65 A5.3,5.3 0 0 1 4.59,2.65 L1.73,1 A2,2 0 0 0 1.73,-1Z" fill="#ff4810"/>
<path d="M4.59,2.65 A5.3,5.3 0 0 1 0,5.3 L0,2 A2,2 0 0 0 1.73,1Z" fill="#f81060"/>
<path d="M0,5.3 A5.3,5.3 0 0 1 -4.59,2.65 L-1.73,1 A2,2 0 0 0 0,2Z" fill="#f0a0a8"/>
<path d="M-4.59,2.65 A5.3,5.3 0 0 1 -4.59,-2.65 L-1.73,-1 A2,2 0 0 0 -1.73,1Z" fill="#10e028"/>
<path d="M-4.59,-2.65 A5.3,5.3 0 0 1 0,-5.3 L0,-2 A2,2 0 0 0 -1.73,-1Z" fill="#10d070"/>
</g>
<circle r="2.1" fill="#1a1a1a"/>
</g>
<rect x="18.4" y="7.6" width="11.6" height="5.4" rx="1.2" fill="#1a1a1a"/>
<rect x="20.4" y="9.3" width="7.2" height="2" fill="#fff"/>
<path d="M19.6,11.6 L26.2,4.2 L28,5.8 L21.4,13.2Z" fill="#f0c050"/>
<path d="M26.2,4.2 L27.4,2.9 L29.2,4.5 L28,5.8Z" fill="#e8b8a8"/>
<path d="M27.6,15 L31,11.2 L31,15Z" fill="#20b8e8"/>
<rect x="34.8" y="2.6" width="11.6" height="11.6" fill="#e8e8e8" stroke="#a8a8a8" stroke-width="0.8"/>
<rect x="34.8" y="2.4" width="11.6" height="2.2" fill="#10c0e8"/>
<path d="M36.8,11.2 C39.5,11.5 40,6.8 42.6,6.8 L45,6.8" stroke="#333" stroke-width="1.3" fill="none"/>
<path d="M43.6,5.3 L45.4,6.8 L43.6,8.3" stroke="#333" stroke-width="1" fill="none"/>
<circle cx="43.8" cy="11" r="1.3" stroke="#777" stroke-width="0.7" fill="none"/>
</svg></div>
<div class="ln" style="top:19.00px"><span style="color:#1e2a2a">.text:0000000000402AAE</span></div>
<div class="ln" style="top:31.40px"><span style="color:#1e2a2a">.text:0000000000402AAE</span><span style="color:#1c1c96"> loc_402AAE:</span></div>
<div class="ln" style="top:43.80px"><span style="color:#1e2a2a">.text:0000000000402AAE</span><span style="color:#1c1c96"> cmp     r15d, 1</span></div>
<div class="ln" style="top:56.20px"><span style="color:#1e2a2a">.text:0000000000402AB1</span><span style="color:#1c1c96"> mov     eax, 1</span></div>
<div class="ln" style="top:68.60px"><span style="color:#1e2a2a">.text:0000000000402AB8</span><span style="color:#1c1c96"> jz      loc_402ACA</span></div>

</div>
<div class="node" style="left:24px;top:231px;width:292px;height:72.0px">
<div class="tb"><svg class="ic" width="50" height="15" viewBox="0 0 50 15">
<g transform="translate(7,7.9)">
<circle r="6.1" fill="#222"/>
<g transform="rotate(30)">
<path d="M0,-5.3 A5.3,5.3 0 0 1 4.59,-2.65 L1.73,-1 A2,2 0 0 0 0,-2Z" fill="#1878b8"/>
<path d="M4.59,-2.65 A5.3,5.3 0 0 1 4.59,2.65 L1.73,1 A2,2 0 0 0 1.73,-1Z" fill="#ff4810"/>
<path d="M4.59,2.65 A5.3,5.3 0 0 1 0,5.3 L0,2 A2,2 0 0 0 1.73,1Z" fill="#f81060"/>
<path d="M0,5.3 A5.3,5.3 0 0 1 -4.59,2.65 L-1.73,1 A2,2 0 0 0 0,2Z" fill="#f0a0a8"/>
<path d="M-4.59,2.65 A5.3,5.3 0 0 1 -4.59,-2.65 L-1.73,-1 A2,2 0 0 0 -1.73,1Z" fill="#10e028"/>
<path d="M-4.59,-2.65 A5.3,5.3 0 0 1 0,-5.3 L0,-2 A2,2 0 0 0 -1.73,-1Z" fill="#10d070"/>
</g>
<circle r="2.1" fill="#1a1a1a"/>
</g>
<rect x="18.4" y="7.6" width="11.6" height="5.4" rx="1.2" fill="#1a1a1a"/>
<rect x="20.4" y="9.3" width="7.2" height="2" fill="#fff"/>
<path d="M19.6,11.6 L26.2,4.2 L28,5.8 L21.4,13.2Z" fill="#f0c050"/>
<path d="M26.2,4.2 L27.4,2.9 L29.2,4.5 L28,5.8Z" fill="#e8b8a8"/>
<path d="M27.6,15 L31,11.2 L31,15Z" fill="#20b8e8"/>
<rect x="34.8" y="2.6" width="11.6" height="11.6" fill="#e8e8e8" stroke="#a8a8a8" stroke-width="0.8"/>
<rect x="34.8" y="2.4" width="11.6" height="2.2" fill="#10c0e8"/>
<path d="M36.8,11.2 C39.5,11.5 40,6.8 42.6,6.8 L45,6.8" stroke="#333" stroke-width="1.3" fill="none"/>
<path d="M43.6,5.3 L45.4,6.8 L43.6,8.3" stroke="#333" stroke-width="1" fill="none"/>
<circle cx="43.8" cy="11" r="1.3" stroke="#777" stroke-width="0.7" fill="none"/>
</svg></div>
<div class="ln" style="top:19.00px"><span style="color:#1e2a2a">.text:0000000000402AC0</span></div>
<div class="ln" style="top:31.40px"><span style="color:#1e2a2a">.text:0000000000402AC0</span><span style="color:#1c1c96"> loc_402AC0:</span></div>
<div class="ln" style="top:43.80px"><span style="color:#1e2a2a">.text:0000000000402AC0</span><span style="color:#1c1c96"> mov     r15d, r9d</span></div>
<div class="ln" style="top:56.20px"><span style="color:#1e2a2a">.text:0000000000402AC3</span><span style="color:#1c1c96"> mov     [rbp+</span><span style="color:#108a28">var_C8</span><span style="color:#1c1c96">], rdx</span></div>

</div>
<div class="node" style="left:324px;top:231px;width:352px;height:96.8px">
<div class="tb"><svg class="ic" width="50" height="15" viewBox="0 0 50 15">
<g transform="translate(7,7.9)">
<circle r="6.1" fill="#222"/>
<g transform="rotate(30)">
<path d="M0,-5.3 A5.3,5.3 0 0 1 4.59,-2.65 L1.73,-1 A2,2 0 0 0 0,-2Z" fill="#1878b8"/>
<path d="M4.59,-2.65 A5.3,5.3 0 0 1 4.59,2.65 L1.73,1 A2,2 0 0 0 1.73,-1Z" fill="#ff4810"/>
<path d="M4.59,2.65 A5.3,5.3 0 0 1 0,5.3 L0,2 A2,2 0 0 0 1.73,1Z" fill="#f81060"/>
<path d="M0,5.3 A5.3,5.3 0 0 1 -4.59,2.65 L-1.73,1 A2,2 0 0 0 0,2Z" fill="#f0a0a8"/>
<path d="M-4.59,2.65 A5.3,5.3 0 0 1 -4.59,-2.65 L-1.73,-1 A2,2 0 0 0 -1.73,1Z" fill="#10e028"/>
<path d="M-4.59,-2.65 A5.3,5.3 0 0 1 0,-5.3 L0,-2 A2,2 0 0 0 -1.73,-1Z" fill="#10d070"/>
</g>
<circle r="2.1" fill="#1a1a1a"/>
</g>
<rect x="18.4" y="7.6" width="11.6" height="5.4" rx="1.2" fill="#1a1a1a"/>
<rect x="20.4" y="9.3" width="7.2" height="2" fill="#fff"/>
<path d="M19.6,11.6 L26.2,4.2 L28,5.8 L21.4,13.2Z" fill="#f0c050"/>
<path d="M26.2,4.2 L27.4,2.9 L29.2,4.5 L28,5.8Z" fill="#e8b8a8"/>
<path d="M27.6,15 L31,11.2 L31,15Z" fill="#20b8e8"/>
<rect x="34.8" y="2.6" width="11.6" height="11.6" fill="#e8e8e8" stroke="#a8a8a8" stroke-width="0.8"/>
<rect x="34.8" y="2.4" width="11.6" height="2.2" fill="#10c0e8"/>
<path d="M36.8,11.2 C39.5,11.5 40,6.8 42.6,6.8 L45,6.8" stroke="#333" stroke-width="1.3" fill="none"/>
<path d="M43.6,5.3 L45.4,6.8 L43.6,8.3" stroke="#333" stroke-width="1" fill="none"/>
<circle cx="43.8" cy="11" r="1.3" stroke="#777" stroke-width="0.7" fill="none"/>
</svg></div>
<div class="ln" style="top:19.00px"><span style="color:#1e2a2a">.text:0000000000403BBD</span></div>
<div class="ln" style="top:31.40px"><span style="color:#1e2a2a">.text:0000000000403BBD</span><span style="color:#1c1c96"> loc_403BBD:</span></div>
<div class="ln" style="top:43.80px"><span style="color:#1e2a2a">.text:0000000000403BBD</span><span style="color:#1c1c96"> mov     rdi, [rbp+</span><span style="color:#108a28">var_38</span><span style="color:#1c1c96">]</span></div>
<div class="ln" style="top:56.20px"><span style="color:#1e2a2a">.text:0000000000403BC1</span><span style="color:#1c1c96"> xor     rdi, fs:</span><span style="color:#108a28">28h</span></div>
<div class="ln" style="top:68.60px"><span style="color:#1e2a2a">.text:0000000000403BCA</span><span style="color:#1c1c96"> mov     eax, dword ptr [rbp+</span><span style="color:#108a28">var_E8</span><span style="color:#1c1c96">]</span></div>
<div class="ln" style="top:81.00px"><span style="color:#1e2a2a">.text:0000000000403BD0</span><span style="color:#1c1c96"> jnz     loc_4043E0</span></div>

</div>
<div class="node" style="left:692px;top:231px;width:300px;height:47.2px">
<div class="tb"><svg class="ic" width="50" height="15" viewBox="0 0 50 15">
<g transform="translate(7,7.9)">
<circle r="6.1" fill="#222"/>
<g transform="rotate(30)">
<path d="M0,-5.3 A5.3,5.3 0 0 1 4.59,-2.65 L1.73,-1 A2,2 0 0 0 0,-2Z" fill="#1878b8"/>
<path d="M4.59,-2.65 A5.3,5.3 0 0 1 4.59,2.65 L1.73,1 A2,2 0 0 0 1.73,-1Z" fill="#ff4810"/>
<path d="M4.59,2.65 A5.3,5.3 0 0 1 0,5.3 L0,2 A2,2 0 0 0 1.73,1Z" fill="#f81060"/>
<path d="M0,5.3 A5.3,5.3 0 0 1 -4.59,2.65 L-1.73,1 A2,2 0 0 0 0,2Z" fill="#f0a0a8"/>
<path d="M-4.59,2.65 A5.3,5.3 0 0 1 -4.59,-2.65 L-1.73,-1 A2,2 0 0 0 -1.73,1Z" fill="#10e028"/>
<path d="M-4.59,-2.65 A5.3,5.3 0 0 1 0,-5.3 L0,-2 A2,2 0 0 0 -1.73,-1Z" fill="#10d070"/>
</g>
<circle r="2.1" fill="#1a1a1a"/>
</g>
<rect x="18.4" y="7.6" width="11.6" height="5.4" rx="1.2" fill="#1a1a1a"/>
<rect x="20.4" y="9.3" width="7.2" height="2" fill="#fff"/>
<path d="M19.6,11.6 L26.2,4.2 L28,5.8 L21.4,13.2Z" fill="#f0c050"/>
<path d="M26.2,4.2 L27.4,2.9 L29.2,4.5 L28,5.8Z" fill="#e8b8a8"/>
<path d="M27.6,15 L31,11.2 L31,15Z" fill="#20b8e8"/>
<rect x="34.8" y="2.6" width="11.6" height="11.6" fill="#e8e8e8" stroke="#a8a8a8" stroke-width="0.8"/>
<rect x="34.8" y="2.4" width="11.6" height="2.2" fill="#10c0e8"/>
<path d="M36.8,11.2 C39.5,11.5 40,6.8 42.6,6.8 L45,6.8" stroke="#333" stroke-width="1.3" fill="none"/>
<path d="M43.6,5.3 L45.4,6.8 L43.6,8.3" stroke="#333" stroke-width="1" fill="none"/>
<circle cx="43.8" cy="11" r="1.3" stroke="#777" stroke-width="0.7" fill="none"/>
</svg></div>
<div class="ln" style="top:19.00px"><span style="color:#1e2a2a">.text:0000000000402B12</span></div>
<div class="ln" style="top:31.40px"><span style="color:#1e2a2a">.text:0000000000402B12</span><span style="color:#1c1c96"> loc_402B12:</span></div>

</div>
<div class="node" style="left:97px;top:411px;width:250px;height:59.6px">
<div class="tb"><svg class="ic" width="50" height="15" viewBox="0 0 50 15">
<g transform="translate(7,7.9)">
<circle r="6.1" fill="#222"/>
<g transform="rotate(30)">
<path d="M0,-5.3 A5.3,5.3 0 0 1 4.59,-2.65 L1.73,-1 A2,2 0 0 0 0,-2Z" fill="#1878b8"/>
<path d="M4.59,-2.65 A5.3,5.3 0 0 1 4.59,2.65 L1.73,1 A2,2 0 0 0 1.73,-1Z" fill="#ff4810"/>
<path d="M4.59,2.65 A5.3,5.3 0 0 1 0,5.3 L0,2 A2,2 0 0 0 1.73,1Z" fill="#f81060"/>
<path d="M0,5.3 A5.3,5.3 0 0 1 -4.59,2.65 L-1.73,1 A2,2 0 0 0 0,2Z" fill="#f0a0a8"/>
<path d="M-4.59,2.65 A5.3,5.3 0 0 1 -4.59,-2.65 L-1.73,-1 A2,2 0 0 0 -1.73,1Z" fill="#10e028"/>
<path d="M-4.59,-2.65 A5.3,5.3 0 0 1 0,-5.3 L0,-2 A2,2 0 0 0 -1.73,-1Z" fill="#10d070"/>
</g>
<circle r="2.1" fill="#1a1a1a"/>
</g>
<rect x="18.4" y="7.6" width="11.6" height="5.4" rx="1.2" fill="#1a1a1a"/>
<rect x="20.4" y="9.3" width="7.2" height="2" fill="#fff"/>
<path d="M19.6,11.6 L26.2,4.2 L28,5.8 L21.4,13.2Z" fill="#f0c050"/>
<path d="M26.2,4.2 L27.4,2.9 L29.2,4.5 L28,5.8Z" fill="#e8b8a8"/>
<path d="M27.6,15 L31,11.2 L31,15Z" fill="#20b8e8"/>
<rect x="34.8" y="2.6" width="11.6" height="11.6" fill="#e8e8e8" stroke="#a8a8a8" stroke-width="0.8"/>
<rect x="34.8" y="2.4" width="11.6" height="2.2" fill="#10c0e8"/>
<path d="M36.8,11.2 C39.5,11.5 40,6.8 42.6,6.8 L45,6.8" stroke="#333" stroke-width="1.3" fill="none"/>
<path d="M43.6,5.3 L45.4,6.8 L43.6,8.3" stroke="#333" stroke-width="1" fill="none"/>
<circle cx="43.8" cy="11" r="1.3" stroke="#777" stroke-width="0.7" fill="none"/>
</svg></div>
<div class="ln" style="top:19.00px"><span style="color:#1e2a2a">.text:00000000004043E0</span></div>
<div class="ln" style="top:31.40px"><span style="color:#1e2a2a">.text:00000000004043E0</span><span style="color:#1c1c96"> loc_4043E0:</span></div>
<div class="ln" style="top:43.80px"><span style="color:#1e2a2a">.text:00000000004043E0</span><span style="color:#1c1c96"> call    sub_402100</span></div>

</div>
<div class="node" style="left:355px;top:411px;width:292px;height:158.8px">
<div class="tb"><svg class="ic" width="50" height="15" viewBox="0 0 50 15">
<g transform="translate(7,7.9)">
<circle r="6.1" fill="#222"/>
<g transform="rotate(30)">
<path d="M0,-5.3 A5.3,5.3 0 0 1 4.59,-2.65 L1.73,-1 A2,2 0 0 0 0,-2Z" fill="#1878b8"/>
<path d="M4.59,-2.65 A5.3,5.3 0 0 1 4.59,2.65 L1.73,1 A2,2 0 0 0 1.73,-1Z" fill="#ff4810"/>
<path d="M4.59,2.65 A5.3,5.3 0 0 1 0,5.3 L0,2 A2,2 0 0 0 1.73,1Z" fill="#f81060"/>
<path d="M0,5.3 A5.3,5.3 0 0 1 -4.59,2.65 L-1.73,1 A2,2 0 0 0 0,2Z" fill="#f0a0a8"/>
<path d="M-4.59,2.65 A5.3,5.3 0 0 1 -4.59,-2.65 L-1.73,-1 A2,2 0 0 0 -1.73,1Z" fill="#10e028"/>
<path d="M-4.59,-2.65 A5.3,5.3 0 0 1 0,-5.3 L0,-2 A2,2 0 0 0 -1.73,-1Z" fill="#10d070"/>
</g>
<circle r="2.1" fill="#1a1a1a"/>
</g>
<rect x="18.4" y="7.6" width="11.6" height="5.4" rx="1.2" fill="#1a1a1a"/>
<rect x="20.4" y="9.3" width="7.2" height="2" fill="#fff"/>
<path d="M19.6,11.6 L26.2,4.2 L28,5.8 L21.4,13.2Z" fill="#f0c050"/>
<path d="M26.2,4.2 L27.4,2.9 L29.2,4.5 L28,5.8Z" fill="#e8b8a8"/>
<path d="M27.6,15 L31,11.2 L31,15Z" fill="#20b8e8"/>
<rect x="34.8" y="2.6" width="11.6" height="11.6" fill="#e8e8e8" stroke="#a8a8a8" stroke-width="0.8"/>
<rect x="34.8" y="2.4" width="11.6" height="2.2" fill="#10c0e8"/>
<path d="M36.8,11.2 C39.5,11.5 40,6.8 42.6,6.8 L45,6.8" stroke="#333" stroke-width="1.3" fill="none"/>
<path d="M43.6,5.3 L45.4,6.8 L43.6,8.3" stroke="#333" stroke-width="1" fill="none"/>
<circle cx="43.8" cy="11" r="1.3" stroke="#777" stroke-width="0.7" fill="none"/>
</svg></div>
<div class="ln" style="top:19.00px"><span style="color:#1e2a2a">.text:0000000000402ACA</span></div>
<div class="ln" style="top:31.40px"><span style="color:#1e2a2a">.text:0000000000402ACA</span><span style="color:#1c1c96"> loc_402ACA:</span></div>
<div class="ln" style="top:43.80px"><span style="color:#1e2a2a">.text:0000000000402ACA</span><span style="color:#1c1c96"> movzx   eax, r15b</span></div>
<div class="ln" style="top:56.20px"><span style="color:#1e2a2a">.text:0000000000402ACE</span><span style="color:#1c1c96"> movzx   edi, di</span></div>
<div class="ln" style="top:68.60px"><span style="color:#1e2a2a">.text:0000000000402AD1</span><span style="color:#1c1c96"> shl     eax, </span><span style="color:#108a28">10h</span></div>
<div class="ln" style="top:81.00px"><span style="color:#1e2a2a">.text:0000000000402AD4</span><span style="color:#1c1c96"> or      edi, eax</span></div>
<div class="ln" style="top:93.40px"><span style="color:#1e2a2a">.text:0000000000402AD6</span><span style="color:#1c1c96"> cmp     [rbp+</span><span style="color:#108a28">var_68</span><span style="color:#1c1c96">], </span><span style="color:#108a28">0</span></div>
<div class="ln" style="top:105.80px"><span style="color:#1e2a2a">.text:0000000000402ADB</span><span style="color:#1c1c96"> lea     rax, unk_428E71</span></div>
<div class="ln" style="top:118.20px"><span style="color:#1e2a2a">.text:0000000000402AE2</span><span style="color:#1c1c96"> mov     [rbp+</span><span style="color:#108a28">var_D4</span><span style="color:#1c1c96">], edi</span></div>
<div class="ln" style="top:130.60px"><span style="color:#1e2a2a">.text:0000000000402AE8</span><span style="color:#1c1c96"> mov     [rbp+</span><span style="color:#108a28">var_F8</span><span style="color:#1c1c96">], rax</span></div>
<div class="ln" style="top:143.00px"><span style="color:#1e2a2a">.text:0000000000402AEF</span><span style="color:#1c1c96"> jz      short loc_402B12</span></div>

</div>
<div class="node" style="left:655px;top:411px;width:300px;height:183.6px">
<div class="tb"><svg class="ic" width="50" height="15" viewBox="0 0 50 15">
<g transform="translate(7,7.9)">
<circle r="6.1" fill="#222"/>
<g transform="rotate(30)">
<path d="M0,-5.3 A5.3,5.3 0 0 1 4.59,-2.65 L1.73,-1 A2,2 0 0 0 0,-2Z" fill="#1878b8"/>
<path d="M4.59,-2.65 A5.3,5.3 0 0 1 4.59,2.65 L1.73,1 A2,2 0 0 0 1.73,-1Z" fill="#ff4810"/>
<path d="M4.59,2.65 A5.3,5.3 0 0 1 0,5.3 L0,2 A2,2 0 0 0 1.73,1Z" fill="#f81060"/>
<path d="M0,5.3 A5.3,5.3 0 0 1 -4.59,2.65 L-1.73,1 A2,2 0 0 0 0,2Z" fill="#f0a0a8"/>
<path d="M-4.59,2.65 A5.3,5.3 0 0 1 -4.59,-2.65 L-1.73,-1 A2,2 0 0 0 -1.73,1Z" fill="#10e028"/>
<path d="M-4.59,-2.65 A5.3,5.3 0 0 1 0,-5.3 L0,-2 A2,2 0 0 0 -1.73,-1Z" fill="#10d070"/>
</g>
<circle r="2.1" fill="#1a1a1a"/>
</g>
<rect x="18.4" y="7.6" width="11.6" height="5.4" rx="1.2" fill="#1a1a1a"/>
<rect x="20.4" y="9.3" width="7.2" height="2" fill="#fff"/>
<path d="M19.6,11.6 L26.2,4.2 L28,5.8 L21.4,13.2Z" fill="#f0c050"/>
<path d="M26.2,4.2 L27.4,2.9 L29.2,4.5 L28,5.8Z" fill="#e8b8a8"/>
<path d="M27.6,15 L31,11.2 L31,15Z" fill="#20b8e8"/>
<rect x="34.8" y="2.6" width="11.6" height="11.6" fill="#e8e8e8" stroke="#a8a8a8" stroke-width="0.8"/>
<rect x="34.8" y="2.4" width="11.6" height="2.2" fill="#10c0e8"/>
<path d="M36.8,11.2 C39.5,11.5 40,6.8 42.6,6.8 L45,6.8" stroke="#333" stroke-width="1.3" fill="none"/>
<path d="M43.6,5.3 L45.4,6.8 L43.6,8.3" stroke="#333" stroke-width="1" fill="none"/>
<circle cx="43.8" cy="11" r="1.3" stroke="#777" stroke-width="0.7" fill="none"/>
</svg></div>
<div class="ln" style="top:19.00px"><span style="color:#1e2a2a">.text:0000000000402AF5</span></div>
<div class="ln" style="top:31.40px"><span style="color:#1e2a2a">.text:0000000000402AF5</span><span style="color:#1c1c96"> loc_402AF5:</span></div>
<div class="ln" style="top:43.80px"><span style="color:#1e2a2a">.text:0000000000402AF5</span><span style="color:#1c1c96"> mov     eax, 1</span></div>
<div class="ln" style="top:56.20px"><span style="color:#1e2a2a">.text:0000000000402AF5</span><span style="color:#1c1c96"> mov     eax, 1</span></div>
<div class="ln" style="top:68.60px"><span style="color:#1e2a2a">.text:0000000000402AF5</span><span style="color:#1c1c96"> mov     eax, 1</span></div>
<div class="ln" style="top:81.00px"><span style="color:#1e2a2a">.text:0000000000402AF5</span><span style="color:#1c1c96"> mov     eax, 1</span></div>
<div class="ln" style="top:93.40px"><span style="color:#1e2a2a">.text:0000000000402AF5</span><span style="color:#1c1c96"> mov     eax, 1</span></div>
<div class="ln" style="top:105.80px"><span style="color:#1e2a2a">.text:0000000000402AF5</span><span style="color:#1c1c96"> mov     eax, 1</span></div>
<div class="ln" style="top:118.20px"><span style="color:#1e2a2a">.text:0000000000402AF5</span><span style="color:#1c1c96"> mov     eax, 1</span></div>
<div class="ln" style="top:130.60px"><span style="color:#1e2a2a">.text:0000000000402AF5</span><span style="color:#1c1c96"> mov     eax, 1</span></div>
<div class="ln" style="top:143.00px"><span style="color:#1e2a2a">.text:0000000000402AF5</span><span style="color:#1c1c96"> mov     eax, 1</span></div>
<div class="ln" style="top:155.40px"><span style="color:#1e2a2a">.text:0000000000402AF5</span><span style="color:#1c1c96"> mov     eax, 1</span></div>
<div class="ln" style="top:167.80px"><span style="color:#1e2a2a">.text:0000000000402AF5</span><span style="color:#1c1c96"> mov     eax, 1</span></div>

</div></div></div></div></body></html>
